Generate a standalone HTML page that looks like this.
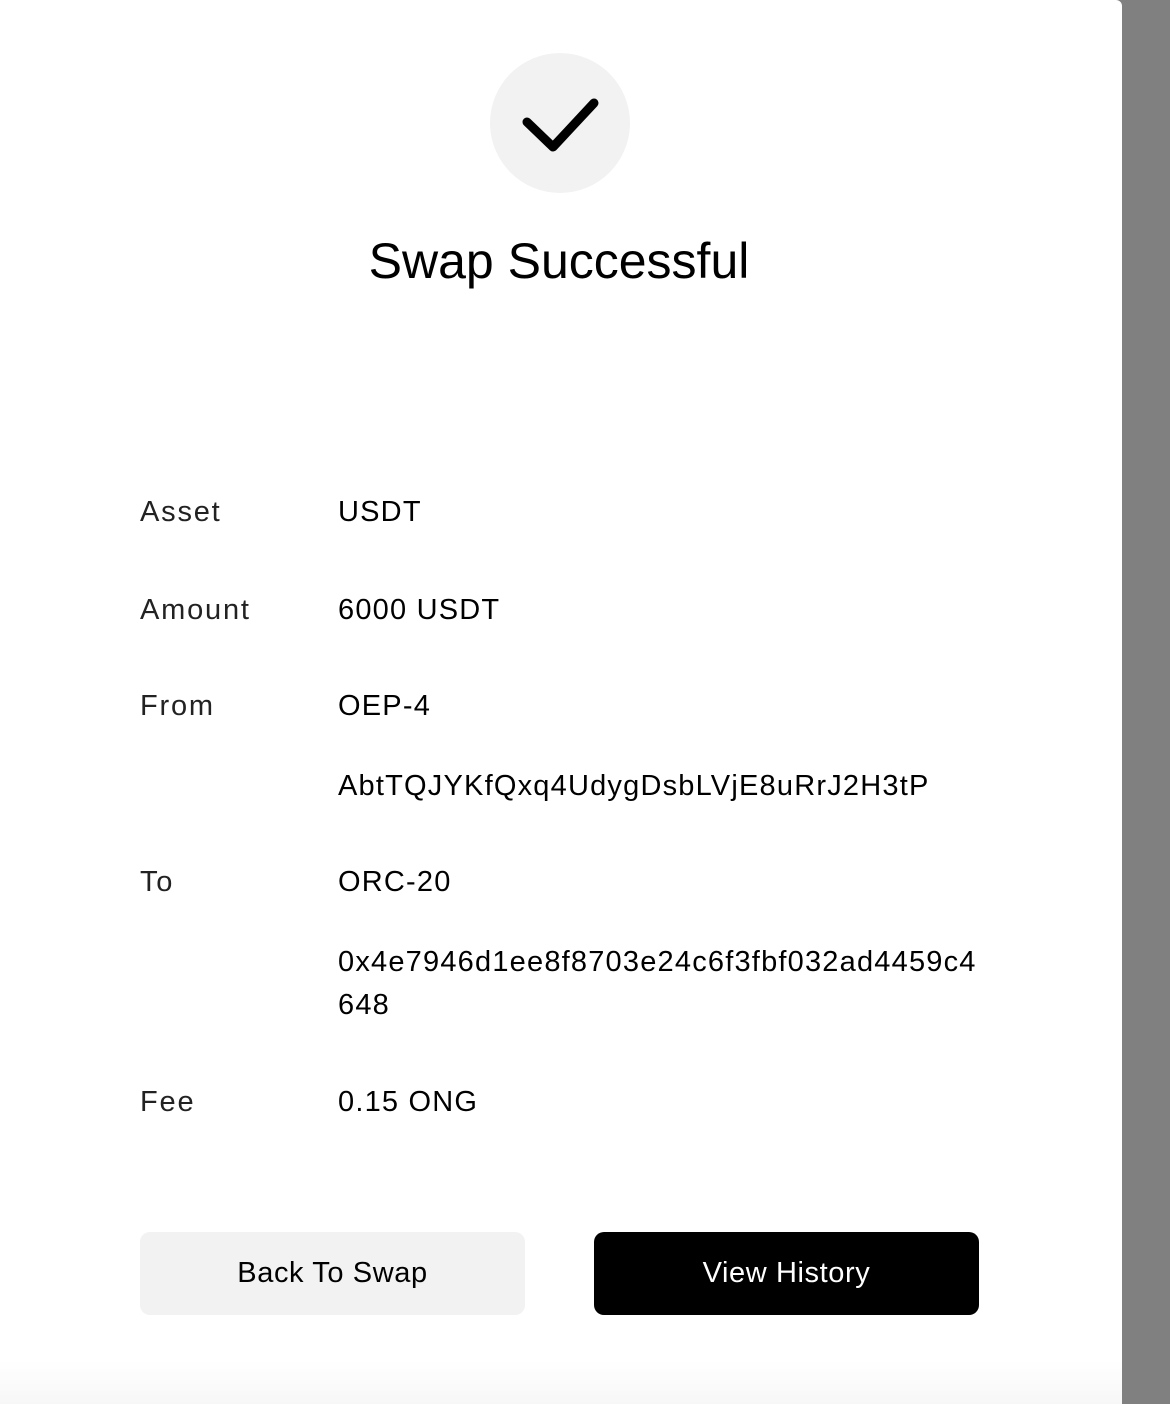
<!DOCTYPE html>
<html><head><meta charset="utf-8"><style>
html,body{margin:0;padding:0;width:1170px;height:1404px;overflow:hidden;background:#808080;font-family:"Liberation Sans",sans-serif;}
.panel{position:absolute;left:0;top:0;width:1122px;height:1404px;background:linear-gradient(to bottom,#fff 0,#fff 1360px,#f7f7f7 1404px);border-top-right-radius:6px;}
.t{position:absolute;font-size:29px;line-height:28px;white-space:nowrap;}
.l{left:140px;color:#222;letter-spacing:1.8px;}
.v{left:338px;color:#000;letter-spacing:1.2px;}
.btn{position:absolute;top:1232px;width:385px;height:83px;border-radius:10px;display:flex;align-items:center;justify-content:center;font-size:29px;letter-spacing:0.6px;}
</style></head><body>
<div class="panel">
<svg style="position:absolute;left:490px;top:53px" width="140" height="140" viewBox="0 0 140 140">
<circle cx="70" cy="70" r="70" fill="#f2f2f2"/>
<path d="M37 69 L63 94 L104 50" fill="none" stroke="#000" stroke-width="9" stroke-linecap="round" stroke-linejoin="round"/>
</svg>
<div style="position:absolute;left:0;width:1118px;top:236px;text-align:center;font-size:50px;line-height:50px;color:#000;">Swap Successful</div>

<div class="t l" style="top:498px">Asset</div><div class="t v" style="top:498px">USDT</div>
<div class="t l" style="top:596px">Amount</div><div class="t v" style="top:596px">6000 USDT</div>
<div class="t l" style="top:692px">From</div><div class="t v" style="top:692px">OEP-4</div>
<div class="t v" style="top:772px">AbtTQJYKfQxq4UdygDsbLVjE8uRrJ2H3tP</div>
<div class="t l" style="top:868px">To</div><div class="t v" style="top:868px">ORC-20</div>
<div class="t v" style="top:948px">0x4e7946d1ee8f8703e24c6f3fbf032ad4459c4</div>
<div class="t v" style="top:991px">648</div>
<div class="t l" style="top:1088px">Fee</div><div class="t v" style="top:1088px">0.15 ONG</div>

<div class="btn" style="left:140px;background:#f2f2f2;color:#000;">Back To Swap</div>
<div class="btn" style="left:594px;background:#000;color:#fff;">View History</div>
</div>
</body></html>
